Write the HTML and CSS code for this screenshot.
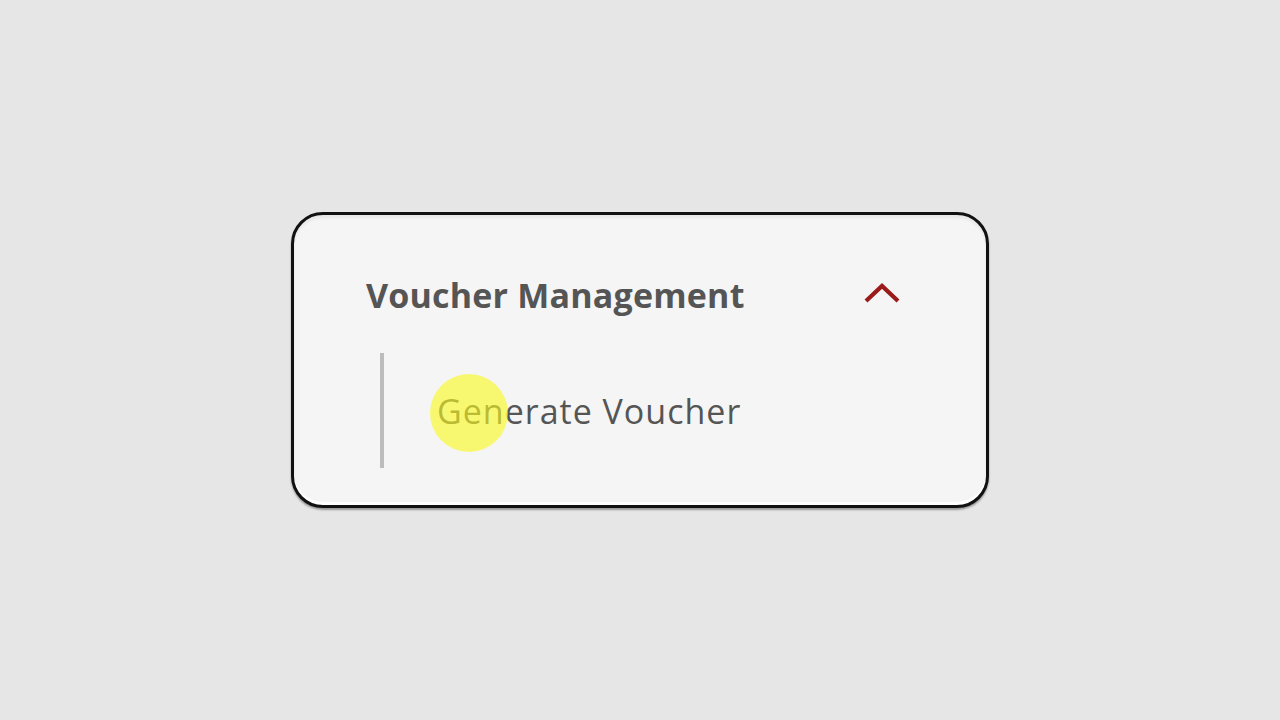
FILE: index.html
```html
<!DOCTYPE html>
<html>
<head>
<meta charset="utf-8">
<link rel="stylesheet" href="styles.css">
</head>
<body>
  <div class="card">
    <div class="header">
      <span class="title">Voucher Management</span>
      <svg class="chevron" width="36" height="20" viewBox="0 0 36 20">
        <polyline points="2,18 18,3 34,18" fill="none" stroke="#9b1a1a" stroke-width="4.2"/>
      </svg>
    </div>
    <div class="submenu">
      <div class="item">
        <span class="item-text">Generate Voucher</span>
        <span class="tap"></span>
      </div>
    </div>
  </div>
</body>
</html>
```
FILE: styles.css
```css
html, body {
  margin: 0;
  padding: 0;
}
body {
  width: 1280px;
  height: 720px;
  background: #e6e6e6;
  display: flex;
  align-items: center;
  justify-content: center;
  font-family: "Open Sans", Roboto, "Liberation Sans", sans-serif;
}
.card {
  box-sizing: border-box;
  width: 698px;
  height: 296px;
  border: 3px solid #111;
  border-radius: 32px;
  background: #f5f5f5;
  box-shadow: inset 0 -3px 0 #ffffff, inset 0 3px 3px rgba(0,0,0,0.06), 0 2px 2px rgba(0,0,0,0.35);
  padding: 60px 86px 0 72px;
}
.header {
  display: flex;
  align-items: center;
  justify-content: space-between;
  height: 40px;
}
.title {
  font-size: 34px;
  font-weight: 700;
  color: #555555;
  line-height: 40px;
  letter-spacing: 0.2px;
}
.chevron {
  display: block;
  margin-top: -4px;
}
.submenu {
  margin-top: 38px;
  margin-left: 14px;
  border-left: 4px solid #bcbcbc;
  height: 115px;
  display: flex;
  align-items: center;
}
.item {
  position: relative;
  padding-left: 53px;
}
.item-text {
  font-size: 34px;
  color: #555555;
  line-height: 40px;
  letter-spacing: 1px;
}
.tap {
  position: absolute;
  left: 46px;
  top: 0px;
  width: 78px;
  height: 78px;
  margin-top: -17px;
  border-radius: 50%;
  background: rgba(250, 250, 30, 0.62);
}
```
